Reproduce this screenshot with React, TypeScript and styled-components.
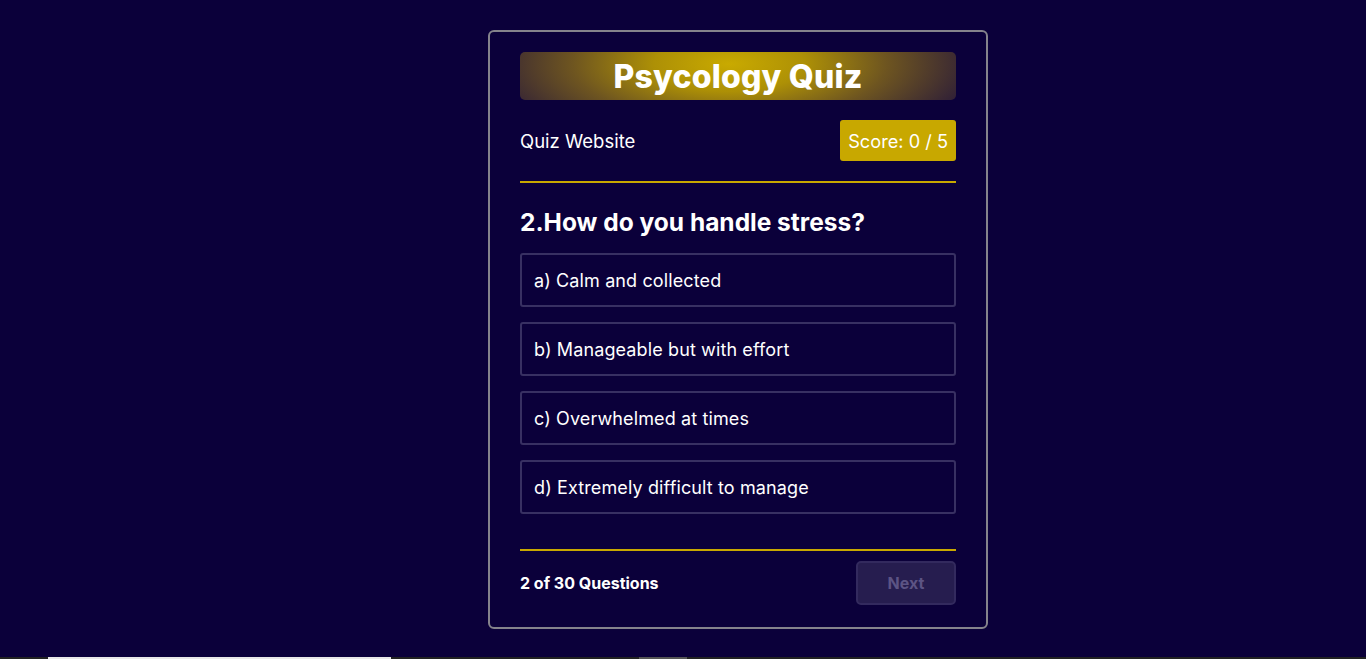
import React from "react";
import styled, { createGlobalStyle } from "styled-components";

const Global = createGlobalStyle`
  html, body { margin: 0; padding: 0; background: #0b003a; }
  body { font-family: Inter, "Open Sans", sans-serif; color: #ffffff; }
  * { box-sizing: border-box; }
`;

const Page = styled.div`
  min-height: 659px;
  display: flex;
  justify-content: center;
  padding-top: 30px;
  padding-left: 110px;
`;

const Card = styled.div`
  width: 500px;
  height: 599px;
  border: 2px solid #85838c;
  border-radius: 6px;
  padding: 20px 30px 20px;
  display: flex;
  flex-direction: column;
`;

const Banner = styled.h1`
  margin: 0;
  height: 48px;
  border-radius: 5px;
  background: radial-gradient(ellipse 58% 190% at 48% 25%, #c9aa00 0%, #ad9006 30%, #6e5520 62%, #2c1c38 100%);
  display: flex;
  align-items: center;
  justify-content: center;
  font-size: 32px;
  font-weight: 800;
  letter-spacing: 0.2px;
  color: #ffffff;
`;

const InfoRow = styled.div`
  margin-top: 20px;
  display: flex;
  align-items: center;
  justify-content: space-between;
  padding-bottom: 20px;
  border-bottom: 2px solid #c8a800;
`;

const SiteName = styled.span`
  font-size: 18.5px;
  font-weight: 400;
`;

const Score = styled.span`
  background: #c8a800;
  border-radius: 3px;
  height: 41px;
  padding: 0 8px;
  display: flex;
  align-items: center;
  font-size: 18.2px;
`;

const Question = styled.h2`
  margin: 24px 0 16px;
  font-size: 24.5px;
  font-weight: 700;
  line-height: 30px;
  letter-spacing: 0;
`;

const Options = styled.ul`
  list-style: none;
  margin: 0;
  padding: 0;
  display: flex;
  flex-direction: column;
  gap: 15px;
`;

const Option = styled.li`
  height: 54px;
  border: 2px solid #383062;
  border-radius: 3px;
  padding: 0 12px;
  display: flex;
  align-items: center;
  font-size: 18px;
  letter-spacing: 0.12px;
`;

const Footer = styled.div`
  margin-top: 35px;
  border-top: 2px solid #c8a800;
  padding-top: 10px;
  display: flex;
  align-items: center;
  justify-content: space-between;
`;

const Count = styled.span`
  font-size: 16px;
  font-weight: 700;
`;

const NextButton = styled.button`
  width: 100px;
  height: 44px;
  background: #261d4f;
  border: 2px solid #332a5e;
  border-radius: 5px;
  color: #5c5484;
  font-family: inherit;
  font-size: 16px;
  font-weight: 700;
`;

const BottomStrip = styled.div`
  position: fixed;
  left: 0;
  right: 0;
  bottom: 0;
  height: 2px;
  background: #222222;
`;

const StripSeg = styled.div<{ $left: number; $width: number; $color: string }>`
  position: absolute;
  top: 0;
  height: 2px;
  left: ${(p) => p.$left}px;
  width: ${(p) => p.$width}px;
  background: ${(p) => p.$color};
`;

const options = [
  "a) Calm and collected",
  "b) Manageable but with effort",
  "c) Overwhelmed at times",
  "d) Extremely difficult to manage",
];

export default function App() {
  return (
    <>
      <Global />
      <Page>
        <Card>
          <Banner>Psycology Quiz</Banner>
          <InfoRow>
            <SiteName>Quiz Website</SiteName>
            <Score>Score: 0 / 5</Score>
          </InfoRow>
          <Question>2.How do you handle stress?</Question>
          <Options>
            {options.map((o) => (
              <Option key={o}>{o}</Option>
            ))}
          </Options>
          <Footer>
            <Count>2 of 30 Questions</Count>
            <NextButton disabled>Next</NextButton>
          </Footer>
        </Card>
      </Page>
      <BottomStrip>
        <StripSeg $left={48} $width={343} $color="#e8e8e8" />
        <StripSeg $left={639} $width={48} $color="#555555" />
      </BottomStrip>
    </>
  );
}
